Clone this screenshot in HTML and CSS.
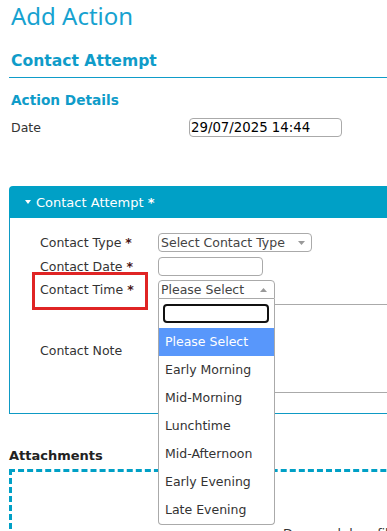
FILE: index.html
```html
<!DOCTYPE html>
<html lang="en">
<head>
  <meta charset="UTF-8" />
  <meta name="viewport" content="width=device-width, initial-scale=1.0"/>
  <title>Add Action</title>
  <link rel="stylesheet" href="styles.css">
</head>
<body>
  <div class="page">
    <h1 class="page-title">Add Action</h1>
    <h2 class="section-title">Contact Attempt</h2>
    <h3 class="sub-title">Action Details</h3>

    <div class="date-row">
      <label for="action-date">Date</label>
      <input type="text" id="action-date" class="text-input date-input" value="29/07/2025 14:44">
    </div>

    <div class="panel">
      <div class="panel-header">
        <svg class="caret" width="6" height="4" viewBox="0 0 6 4"><path d="M0 0H6L3 4Z" fill="#fff"/></svg>
        <span>Contact Attempt <span class="req-white">*</span></span>
      </div>
      <div class="panel-body">
        <div class="form-grid">
          <label>Contact Type <span class="req">*</span></label>
          <div class="select select-type">
            <span>Select Contact Type</span>
            <svg width="7" height="4" viewBox="0 0 7 4"><path d="M0 0H7L3.5 4Z" fill="#999"/></svg>
          </div>

          <label>Contact Date <span class="req">*</span></label>
          <input type="text" class="text-input contact-date">

          <label class="flagged">Contact Time <span class="req">*</span><span class="flag-box"></span></label>
          <div class="select select-time select-open">
            <span>Please Select</span>
            <svg width="7" height="4" viewBox="0 0 7 4"><path d="M0 4H7L3.5 0Z" fill="#999"/></svg>
            <div class="select-dropdown">
              <div class="select-search"><input type="text" class="search-input"></div>
              <ul class="select-options">
                <li class="is-highlighted">Please Select</li>
                <li>Early Morning</li>
                <li>Mid-Morning</li>
                <li>Lunchtime</li>
                <li>Mid-Afternoon</li>
                <li>Early Evening</li>
                <li>Late Evening</li>
              </ul>
            </div>
          </div>

          <label class="note-label">Contact Note</label>
          <textarea class="note-input"></textarea>
        </div>
      </div>
    </div>

    <h4 class="attach-title">Attachments</h4>
    <div class="dropzone">Drag and drop files here or click to upload</div>
  </div>
</body>
</html>
```

FILE: styles.css
```css
body {
  margin: 0;
  font-family: "DejaVu Sans", sans-serif;
  font-size: 12.5px;
  color: #333;
  background: #fff;
  overflow: hidden;
}

.page {
  width: 640px;
  padding-left: 9px;
}

.page-title {
  margin: 0;
  padding-left: 2px;
  font-family: "Noto Sans", sans-serif;
  font-weight: 400;
  font-size: 24px;
  line-height: 32px;
  color: #17a2d0;
}

.section-title {
  margin: 19px 0 0;
  padding: 0 0 6px 2px;
  font-size: 15.6px;
  line-height: 20px;
  color: #0f9cc9;
  border-bottom: 1px solid #0f9cc9;
}

.sub-title {
  margin: 12.5px 0 0;
  padding-left: 2px;
  font-size: 13.7px;
  line-height: 18px;
  color: #0f9cc9;
}

.date-row {
  display: grid;
  grid-template-columns: 178px auto;
  align-items: center;
  margin-top: 9.5px;
  padding-left: 2px;
  line-height: 19px;
}

.text-input {
  box-sizing: border-box;
  height: 19px;
  margin: 0;
  padding: 0 1px;
  border: 1px solid #aaa;
  border-radius: 4px;
  font-family: "DejaVu Sans", sans-serif;
  font-size: 13.3px;
  color: #000;
  background: #fff;
}

.date-input {
  width: 153px;
}

.panel {
  margin-top: 49px;
}

.panel-header {
  box-sizing: border-box;
  height: 32px;
  padding-left: 16px;
  display: flex;
  align-items: center;
  gap: 5px;
  background: #00a0c6;
  color: #fff;
  font-size: 13px;
  border-top-left-radius: 4px;
}

.req-white {
  font-weight: bold;
}

.panel-body {
  border: 1px solid #0e9ac4;
  border-top: none;
  padding: 15px 0 20px 30px;
}

.form-grid {
  display: grid;
  grid-template-columns: 118px auto;
  row-gap: 4.5px;
  align-items: center;
  justify-items: start;
  line-height: 19px;
}

.req {
  color: #4a1515;
  font-weight: bold;
}

.select {
  position: relative;
  box-sizing: border-box;
  height: 19px;
  padding: 0 6px 0 2px;
  display: flex;
  align-items: center;
  justify-content: space-between;
  border: 1px solid #aaa;
  border-radius: 4px;
  color: #444;
  background: #fff;
}

.select-type {
  width: 154px;
}

.contact-date {
  width: 105px;
}

.select-time {
  width: 117px;
  padding-right: 7px;
}

.select-open {
  border-radius: 4px 4px 0 0;
  z-index: 5;
}

.select-dropdown {
  position: absolute;
  top: calc(100% + 1px);
  left: -1px;
  right: -1px;
  background: #fff;
  border: 1px solid #aaa;
  border-top: none;
  border-radius: 0 0 4px 4px;
}

.select-search {
  padding: 5px 5px 5px 4px;
}

.search-input {
  box-sizing: border-box;
  display: block;
  width: 100%;
  height: 19px;
  margin: 0;
  border: 2px solid #111;
  border-radius: 4px;
  outline: none;
}

.select-options {
  margin: 0;
  padding: 0;
  list-style: none;
}

.select-options li {
  line-height: 28px;
  padding-left: 6px;
  color: #333;
}

.select-options li.is-highlighted {
  background: #5897fb;
  color: #fff;
}

.flagged {
  position: relative;
  justify-self: stretch;
}

.flag-box {
  position: absolute;
  top: -8px;
  left: -8px;
  right: 10px;
  bottom: -11px;
  border: 3px solid #e02424;
}

.note-label {
  margin-top: 5px;
}

.note-input {
  box-sizing: border-box;
  display: block;
  width: 320px;
  height: 89px;
  margin: 0;
  border: 1px solid #aaa;
  border-radius: 4px;
  resize: none;
}

.attach-title {
  margin: 34px 0 0;
  font-size: 13px;
  line-height: 16px;
  color: #222;
}

.dropzone {
  margin-top: 5px;
  height: 200px;
  padding: 52px 0 0 271px;
  border: 3px dashed #00a0c6;
  line-height: 19px;
  color: #333;
}
```
